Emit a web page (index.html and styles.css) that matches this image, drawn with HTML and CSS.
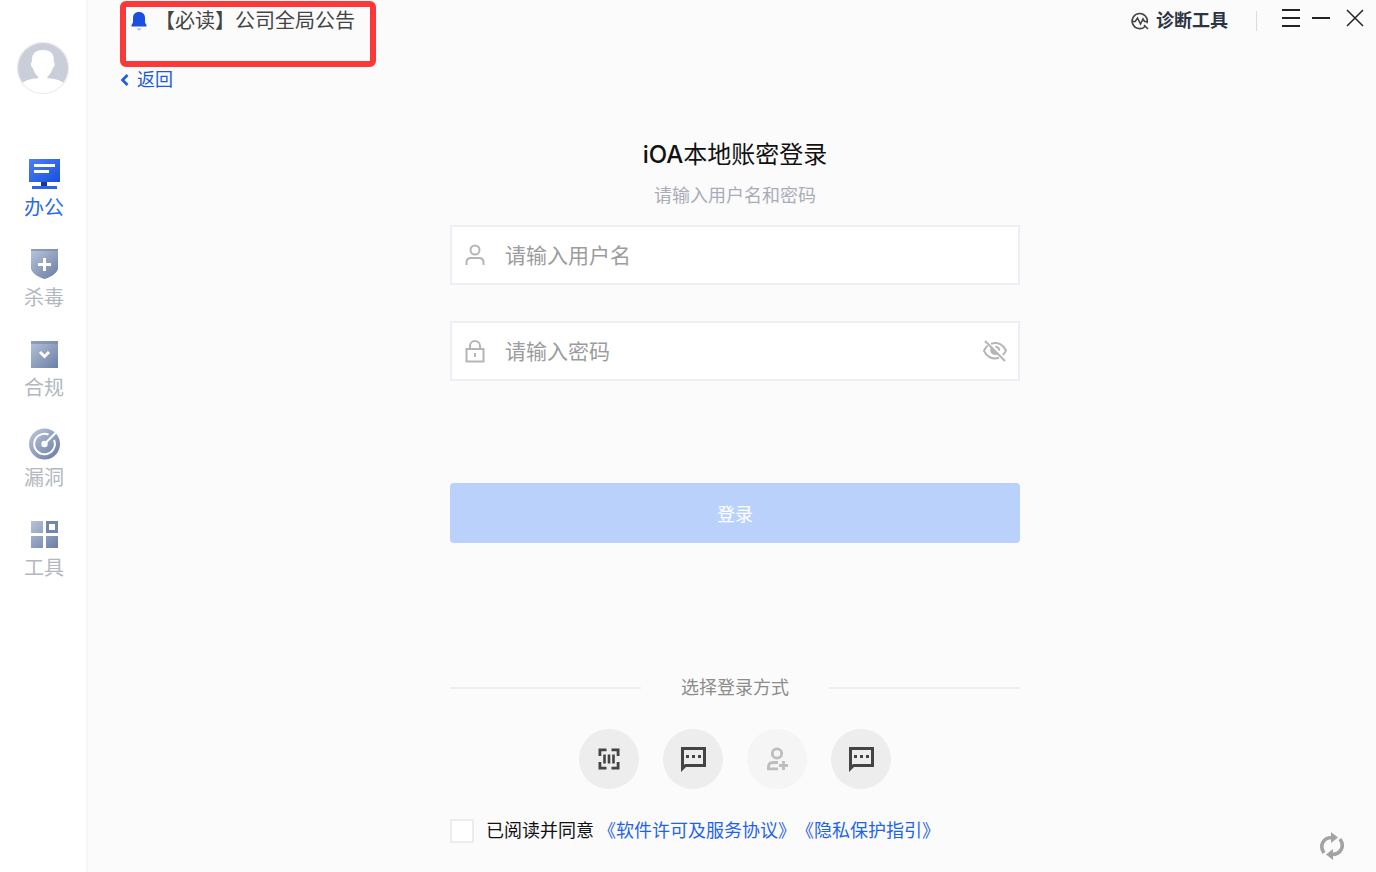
FILE: index.html
```html
<!DOCTYPE html>
<html lang="zh-CN">
<head>
  <meta charset="UTF-8" />
  <meta name="viewport" content="width=device-width, initial-scale=1.0"/>
  <title>iOA本地账密登录</title>
  <link rel="stylesheet" href="styles.css">
</head>
<body>
  <!-- shared gradients for the sidebar icons -->
  <svg class="defs" width="0" height="0" aria-hidden="true">
    <defs>
      <linearGradient id="blue" x1="0" y1="0" x2="1" y2="1">
        <stop offset="0" stop-color="#4a80fb"/>
        <stop offset="1" stop-color="#1a4fd8"/>
      </linearGradient>
      <linearGradient id="steel" gradientUnits="userSpaceOnUse" x1="2" y1="2" x2="28" y2="30">
        <stop offset="0" stop-color="#b9c5d9"/>
        <stop offset="1" stop-color="#6d80a8"/>
      </linearGradient>
    </defs>
  </svg>

  <aside class="sidebar">
    <svg class="avatar" viewBox="0 0 54 54">
      <clipPath id="face"><circle cx="27" cy="27" r="25"/></clipPath>
      <circle cx="27" cy="27" r="25.500" fill="#fff" stroke="#ececee" stroke-width="1.500"/>
      <g clip-path="url(#face)">
        <path fill="#c9ced8" d="M0 0h54v42H0z"/>
        <path fill="#fff" d="M27 9c8 0 11.500 4 10.800 12 1.500 1 .8 5-1 6-1 4-3 6.500-5.500 9v2h-9v-2c-2.500-2.500-4.500-5-5.500-9-1.800-1-2.500-5-1-6C15.500 13 19 9 27 9z"/>
        <path fill="#fff" d="M5 43c4-4 12-6 22-6s18 2 22 6v11H5z"/>
      </g>
    </svg>

    <nav class="nav">
      <a href="#" class="nav-item active">
        <svg viewBox="0 0 32 32">
          <path fill="url(#blue)" d="M1 1h31v23H1z"/>
          <path fill="#fff" d="M6 6h21v3H6zM6 12h15v3H6z"/>
          <path fill="#153a94" d="M13 24h6v5h-6z"/>
          <path fill="#2d63e8" d="M4 28h25v3H4z"/>
        </svg>
        <span>办公</span>
      </a>
      <a href="#" class="nav-item">
        <svg viewBox="0 0 32 32">
          <path fill="url(#steel)" d="M3 1h27v20c-2 5-7 8-13.500 10C10 29 5 26 3 21z"/>
          <path fill="#7485a8" opacity=".6" d="M3 1h27v2H3z"/>
          <path fill="#fff" d="M15 10h3v5h5v3h-5v5h-3v-5h-5v-3h5z"/>
        </svg>
        <span>杀毒</span>
      </a>
      <a href="#" class="nav-item">
        <svg viewBox="0 0 32 32">
          <path fill="url(#steel)" d="M3 3h27v27H3z"/>
          <path fill="#7485a8" opacity=".6" d="M3 3h27v3H3z"/>
          <path fill="none" stroke="#fff" stroke-width="3" d="M12 14l4.500 4.500L21 14"/>
        </svg>
        <span>合规</span>
      </a>
      <a href="#" class="nav-item">
        <svg viewBox="0 0 32 32">
          <circle cx="16.500" cy="16" r="15.500" fill="url(#steel)"/>
          <path fill="none" stroke="#fff" stroke-width="2" d="M20.500 6.500A10.300 10.300 0 1 0 26 12"/>
          <path stroke="#fff" stroke-width="2.200" d="M16.500 16L28 4.500"/>
          <circle cx="16.500" cy="16" r="3.200" fill="#fff"/>
        </svg>
        <span>漏洞</span>
      </a>
      <a href="#" class="nav-item">
        <svg viewBox="0 0 32 32">
          <path fill="url(#steel)" d="M3 3h12v12H3zM18 3h12v12H18zM3 18h12v12H3zM18 18h12v12H18z"/>
          <path fill="#7386ac" fill-rule="evenodd" d="M18 3h12v12H18zM21 6v6h6V6z"/>
          <path fill="#fff" d="M21 6h6v6h-6z"/>
        </svg>
        <span>工具</span>
      </a>
    </nav>
  </aside>

  <main class="main">
    <header class="topbar">
      <a href="#" class="notice">
        <svg width="16" height="20" viewBox="0 0 16 20">
          <path fill="#1a50e0" d="M8 1c4 0 6 2.500 6 6v4.500L15.500 14v1.500H.5V14L2 11.500V7c0-3.500 2-6 6-6z"/>
          <path fill="#8fb0f7" d="M5.500 17.500h5L8 19.500z"/>
        </svg>
        <span>【必读】公司全局公告</span>
      </a>
      <div class="notice-frame"></div>

      <div class="tools">
        <button type="button" class="diagnose">
          <svg width="20" height="20" viewBox="0 0 20 20" fill="none" stroke="#444" stroke-width="1.600">
            <path d="M15.300 15.200A7.600 7.600 0 1 1 17 12.200"/>
            <path d="M2 10.500h3.200L7.500 7l3 6 2.500-5 1.500 2.500h3M14 14l4 4"/>
          </svg>
          <span>诊断工具</span>
        </button>
        <span class="split"></span>
        <div class="win-btns">
          <button type="button" class="win-btn" aria-label="菜单">
            <svg viewBox="0 0 20 20"><path d="M1 2h18M1 10h18M1 18h18"/></svg>
          </button>
          <button type="button" class="win-btn" aria-label="最小化">
            <svg viewBox="0 0 20 20"><path d="M1 10h18"/></svg>
          </button>
          <button type="button" class="win-btn close" aria-label="关闭">
            <svg viewBox="0 0 20 20"><path d="M2 2l16 16M18 2L2 18"/></svg>
          </button>
        </div>
      </div>
    </header>

    <a href="#" class="back">
      <svg width="10" height="12" viewBox="0 0 10 12"><path fill="none" stroke="#1a5ae0" stroke-width="2.600" d="M7.500 1L2.500 6l5 5"/></svg>
      <span>返回</span>
    </a>

    <form class="login">
      <h1><b>iOA</b>本地账密登录</h1>
      <p class="subtext">请输入用户名和密码</p>

      <div class="field">
        <svg width="20" height="24" viewBox="0 0 20 24" fill="none" stroke="#b5b5b5" stroke-width="2">
          <circle cx="10" cy="7" r="4.500"/>
          <path d="M1.500 22v-2.500c0-3 2-4.500 4.500-4.500h8c2.500 0 4.500 1.500 4.500 4.500V22"/>
        </svg>
        <input type="text" placeholder="请输入用户名" aria-label="用户名">
      </div>

      <div class="field">
        <svg width="20" height="24" viewBox="0 0 20 24" fill="none" stroke="#b5b5b5" stroke-width="2">
          <path d="M1.500 10h17v12.500h-17zM5 10V7a5 5 0 0 1 10 0v3M10 14v4"/>
        </svg>
        <input type="password" placeholder="请输入密码" aria-label="密码">
        <button type="button" class="eye" aria-label="显示密码">
          <svg width="26" height="24" viewBox="0 0 26 24" fill="none" stroke="#b5b5b5" stroke-width="2">
            <path d="M9 4.800C16 2.500 21.500 6 24 11.500c-.7 1.800-1.800 3.300-3.300 4.500M17 18.800C10 21 4.500 17.500 2 11.800 2.800 9.800 4 8 5.600 6.800"/>
            <path fill="#b5b5b5" stroke="none" d="M9 8c-2.500 5 1 9.500 7.500 7.500z"/>
            <path d="M13.500 7.800a4 4 0 0 1 3.700 3.800M3 2l20 20"/>
          </svg>
        </button>
      </div>

      <button type="button" class="submit">登录</button>

      <div class="methods-title"><span>选择登录方式</span></div>

      <div class="methods">
        <button type="button" class="method" aria-label="扫码登录">
          <svg viewBox="0 0 24 24" fill="none" stroke="#444" stroke-width="2.800">
            <path d="M2.900 9V2.900H9.500M14.500 2.900h6.600V9M21.100 15v6.100h-6.600M9.500 21.100H2.900V15"/>
            <path stroke-width="2.600" d="M7.500 7.500v9M12 7.500v9M16.500 7.500v9"/>
          </svg>
        </button>
        <button type="button" class="method" aria-label="短信登录">
          <svg viewBox="0 0 24 24">
            <path fill="#444" fill-rule="evenodd" d="M0 0h25v20H5l-5 5zM3 3v15l1-1h18V3z"/>
            <path fill="#444" d="M5 8h3v3H5zM11 8h3v3h-3zM17 8h3v3h-3z"/>
          </svg>
        </button>
        <button type="button" class="method" aria-label="注册账号" disabled>
          <svg viewBox="0 0 24 24" fill="none" stroke="#bdbdbd" stroke-width="2.800">
            <circle cx="12" cy="6.500" r="4.700"/>
            <path d="M13 15.500H8.500c-3.500 0-5 1.500-5 4v2.300H13M18.500 14v9M14 18.500h9"/>
          </svg>
        </button>
        <button type="button" class="method" aria-label="企业登录">
          <svg viewBox="0 0 24 24">
            <path fill="#444" fill-rule="evenodd" d="M0 0h25v20H5l-5 5zM3 3v15l1-1h18V3z"/>
            <path fill="#444" d="M5 8h3v3H5zM11 8h3v3h-3zM17 8h3v3h-3z"/>
          </svg>
        </button>
      </div>

      <div class="agreement">
        <input type="checkbox" id="agree">
        <label for="agree">已阅读并同意</label>
        <div class="links"><a href="#">《软件许可及服务协议》</a><a href="#">《隐私保护指引》</a></div>
      </div>
    </form>
  </main>

  <button type="button" class="refresh" aria-label="刷新">
    <svg width="26" height="30" viewBox="0 0 26 30">
      <path fill="none" stroke="#a3a3a3" stroke-width="3.600" d="M5 22C0 15 4 6.500 13 6.500M21 8C26 15 22 23.500 13 23.500"/>
      <path fill="#a3a3a3" d="M12 1l7 5.500L12 12zM14 18l-7 5.500L14 29z"/>
    </svg>
  </button>
</body>
</html>
```

FILE: styles.css
```css
* {
  box-sizing: border-box;
  margin: 0;
  padding: 0;
  font-family: Inter, 'Noto Sans CJK SC', sans-serif;
}

body {
  background-color: #fbfbfb;
  display: flex;
  min-height: 100vh;
  color: #111;
}

a {
  text-decoration: none;
}

button {
  border: none;
  background: none;
  cursor: pointer;
}

svg {
  display: block;
  flex-shrink: 0;
}

.defs {
  position: absolute;
}

/* sidebar */
.sidebar {
  width: 88px;
  flex-shrink: 0;
  background: #fff;
  box-shadow: inset -2px 0 #f6f6f6;
  padding-top: 41px;
}

.avatar {
  width: 54px;
  height: 54px;
  margin: 0 16px;
}

.nav {
  display: flex;
  flex-direction: column;
  gap: 28px;
  margin-top: 63px;
}

.nav-item {
  display: flex;
  flex-direction: column;
  align-items: center;
  gap: 6px;
  color: #b3b7bf;
  font-size: 20px;
  line-height: 24px;
}

.nav-item svg {
  width: 32px;
  height: 32px;
}

.nav-item.active {
  color: #2a6bea;
}

/* main area */
.main {
  flex: 1;
  padding: 0 26px 0 32px;
}

.topbar {
  position: relative;
  display: flex;
  justify-content: space-between;
  align-items: center;
  height: 42px;
  margin-right: -15px;
}

.notice {
  display: flex;
  align-items: center;
  gap: 8px;
  margin-left: 11px;
  padding-right: 20px;
  color: #444;
  font-size: 20px;
  line-height: 24px;
}

.notice-frame {
  position: absolute;
  left: 0;
  top: 1px;
  width: 256px;
  height: 66px;
  border: 6px solid #fd3838;
  border-radius: 6px;
  pointer-events: none;
}

.tools {
  display: flex;
  align-items: center;
}

.diagnose {
  display: flex;
  align-items: center;
  gap: 6px;
  color: #2b3444;
  font-size: 18px;
  font-weight: 700;
  line-height: 24px;
}

.split {
  width: 1px;
  height: 20px;
  margin: 0 24px 0 28px;
  background: #dcdcdc;
}

.win-btns {
  display: flex;
  gap: 10px;
  padding-bottom: 6px;
}

.win-btn {
  width: 20px;
  height: 20px;
}

.win-btn svg {
  width: 20px;
  height: 20px;
  fill: none;
  stroke: #222;
  stroke-width: 2;
}

.win-btn.close {
  margin-left: 4px;
}

.win-btn.close svg {
  stroke-width: 1.5;
}

.back {
  display: inline-flex;
  align-items: center;
  gap: 7px;
  margin-top: 26px;
  color: #1a5ae0;
  font-size: 18px;
  line-height: 24px;
}

/* login form */
.login {
  width: 100%;
  max-width: 570px;
  margin: 47px auto 0;
  text-align: center;
}

.login h1 {
  font-size: 24px;
  font-weight: 400;
  line-height: 32px;
}

.login h1 b {
  font-weight: 500;
}

.subtext {
  margin: 13px 0 17px;
  color: #a9adb8;
  font-size: 18px;
  line-height: 24px;
}

.field {
  display: flex;
  align-items: center;
  height: 60px;
  margin-bottom: 36px;
  padding: 0 10px 0 13px;
  background: #fff;
  border: 2px solid #edeff4;
}

.field input {
  flex: 1;
  min-width: 0;
  height: 100%;
  margin-left: 20px;
  border: none;
  outline: none;
  background: none;
  font-size: 21px;
  color: #333;
}

.field input::placeholder {
  color: #9c9c9c;
}

.submit {
  width: 100%;
  height: 60px;
  margin-top: 66px;
  border-radius: 4px;
  background: #bad2fb;
  color: #fff;
  font-size: 18px;
}

.methods-title {
  display: flex;
  align-items: center;
  gap: 40px;
  margin-top: 133px;
  color: #8c8c8c;
  font-size: 18px;
  line-height: 24px;
}

.methods-title::before,
.methods-title::after {
  content: "";
  flex: 1;
  height: 2px;
  background: #edeff3;
}

.methods {
  display: flex;
  justify-content: center;
  gap: 24px;
  margin-top: 29px;
}

.method {
  display: flex;
  align-items: center;
  justify-content: center;
  width: 60px;
  height: 60px;
  border-radius: 50%;
  background: #ededed;
}

.method:disabled {
  background: #f5f5f5;
}

.method svg {
  width: 24px;
  height: 24px;
  overflow: visible;
}

.agreement {
  display: flex;
  align-items: center;
  margin-top: 30px;
  font-size: 18px;
  line-height: 24px;
  white-space: nowrap;
}

.agreement input {
  appearance: none;
  width: 24px;
  height: 24px;
  margin-right: 12px;
  background: #fff;
  border: 2px solid #ececf0;
}

.agreement input:checked {
  background: #1a5ae0;
}

.links {
  display: flex;
  margin-left: 4px;
}

.links a {
  color: #1f63ea;
}

.refresh {
  position: fixed;
  right: 31px;
  bottom: 11px;
}
```
